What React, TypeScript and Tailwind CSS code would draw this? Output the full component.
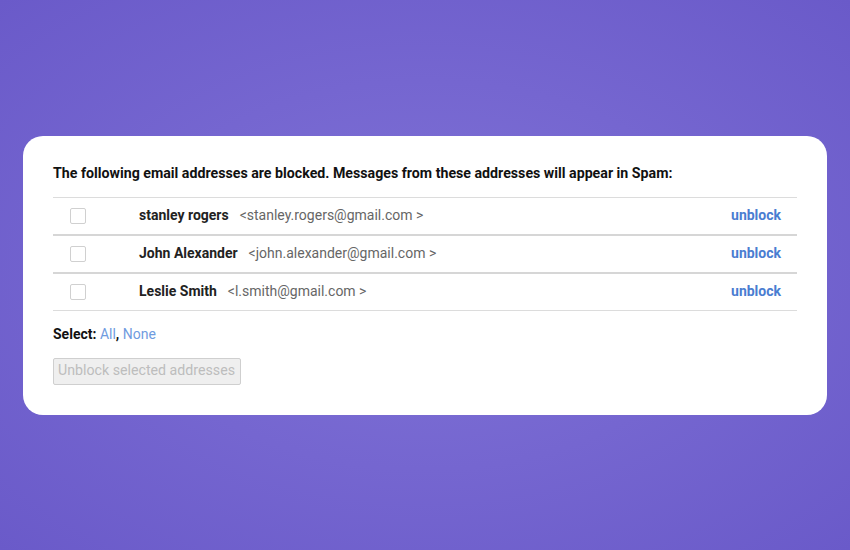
import React from 'react';

const rows = [
  { name: 'stanley rogers', email: '<stanley.rogers@gmail.com >' },
  { name: 'John Alexander', email: '<john.alexander@gmail.com >' },
  { name: 'Leslie Smith', email: '<l.smith@gmail.com >' },
];

const App: React.FC = () => {
  return (
    <div
      className="w-[850px] h-[550px] flex items-center justify-center bg-[radial-gradient(ellipse_at_center,#7f72d6_0%,#7566d0_50%,#6a5ac9_100%)]"
      style={{ fontFamily: 'Roboto, "Liberation Sans", sans-serif' }}
    >
      <div className="w-[804px] h-[279px] bg-white rounded-[20px] px-[30px] pt-[29px]">
        <p className="text-[14.2px] font-bold text-[#111] leading-[16px] mb-[16px]">
          The following email addresses are blocked. Messages from these addresses will appear in Spam:
        </p>
        <div className="border-t border-[#dcdcdc] border-b">
          {rows.map((r, i) => (
            <div
              key={r.name}
              className={i > 0 ? 'flex items-center h-[38px] border-t-2 border-[#d6d6d6]' : 'flex items-center h-[36px]'}
            >
              <div className="w-[16px] h-[16px] ml-[17px] border border-[#d0d0d0] rounded-[2px] bg-white" />
              <span className="ml-[53px] text-[14px] font-bold text-[#222]">{r.name}</span>
              <span className="ml-[11px] text-[14px] text-[#666]">{r.email}</span>
              <span className="ml-auto mr-[16px] text-[14px] font-bold text-[#4a7dd1]">unblock</span>
            </div>
          ))}
        </div>
        <p className="mt-[15px] text-[14px] leading-[16px] text-[#111]">
          <span className="font-bold">Select: </span>
          <span className="text-[#6f9be0]">All</span>
          <span className="font-bold">, </span>
          <span className="text-[#6f9be0]">None</span>
        </p>
        <button className="mt-[16px] h-[27px] w-[188px] border border-[#cfcfcf] rounded-[2px] bg-[#efefef] text-[14.2px] text-[#bdbdbd] text-left pl-[4px] whitespace-nowrap">
          Unblock selected addresses
        </button>
      </div>
    </div>
  );
};

export default App;
